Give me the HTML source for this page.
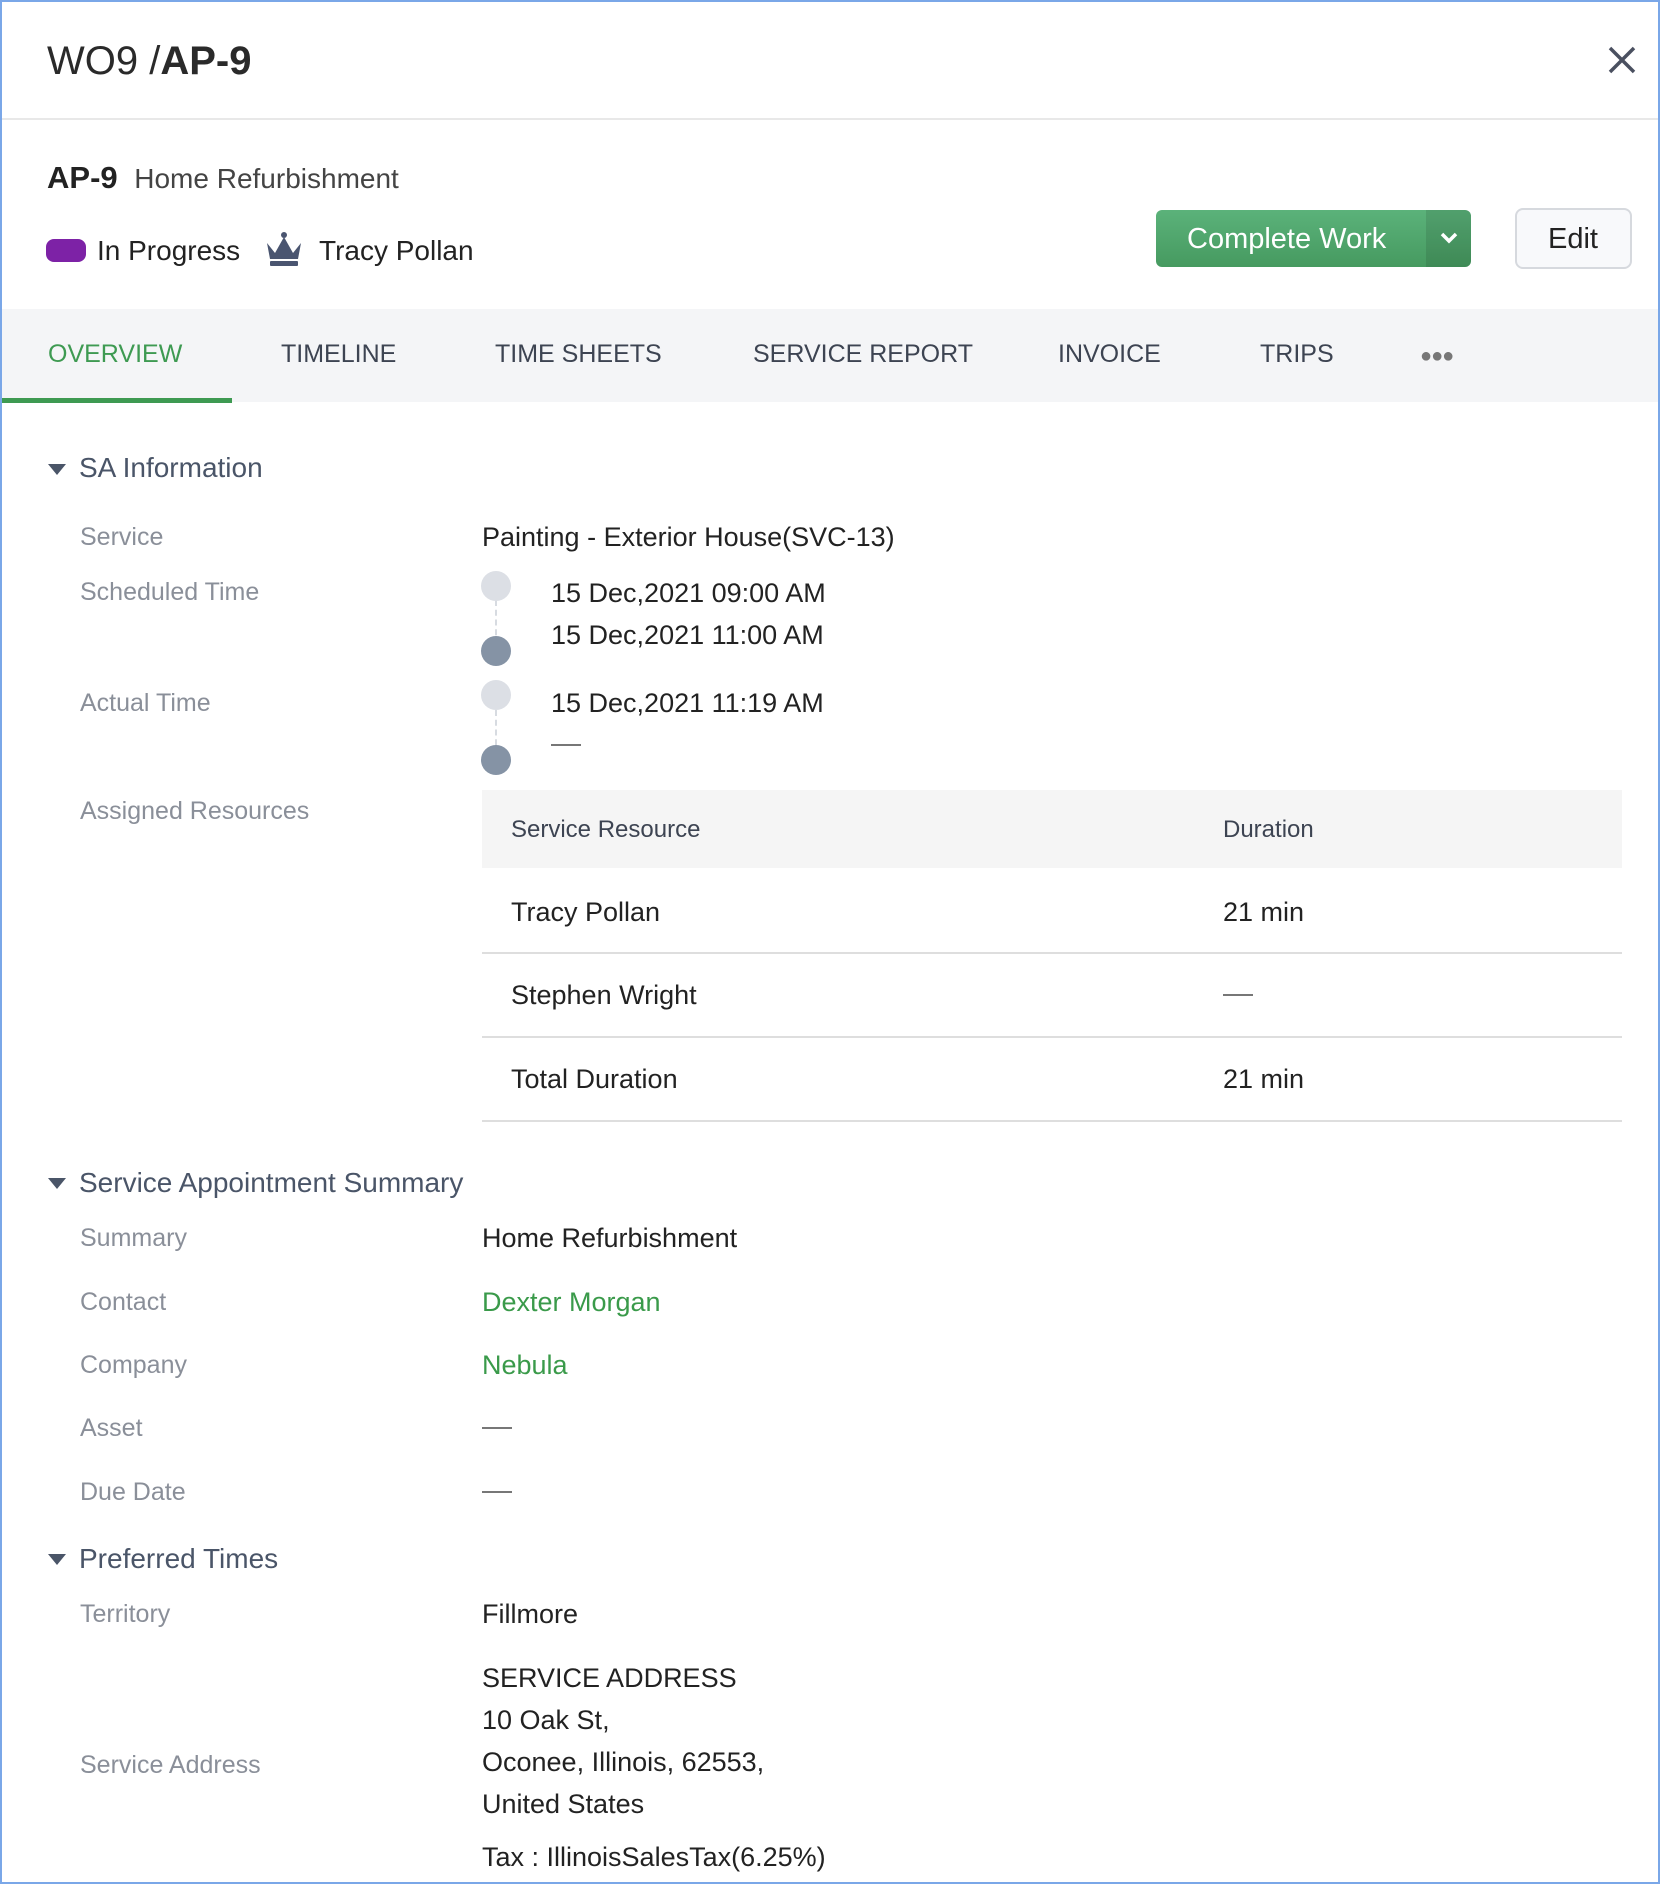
<!DOCTYPE html>
<html><head><meta charset="utf-8"><style>
*{margin:0;padding:0;box-sizing:border-box}
body{width:1660px;height:1884px;background:#fff;font-family:"Liberation Sans",sans-serif;position:relative;overflow:hidden}
.frame{position:absolute;left:0;top:0;width:1660px;height:1884px;border:2px solid #7aa7e8}
.a{position:absolute;white-space:nowrap;line-height:40px;height:40px}
.lbl{color:#8a8f99;font-size:25px;left:80px}
.val{color:#222;font-size:27px;left:482px}
.sec{color:#4a5568;font-size:28px;left:79px}
.tri{position:absolute;left:48px;width:0;height:0;border-left:9px solid transparent;border-right:9px solid transparent;border-top:11px solid #4a5568}
.tab{font-size:25px;color:#3d4452;top:334px}
.dot{position:absolute;width:30px;height:30px;border-radius:50%;left:481px}
.light{background:#dcdfe5}.dark{background:#8593a5}
.vl{position:absolute;left:495px;border-left:2px dashed #d7dbe1;width:0}
.hr{position:absolute;left:482px;width:1140px;height:2px;background:#dedede}
.green{color:#3a9a4a}
</style></head><body>
<div class="frame"></div>
<div class="a" style="left:47px;top:41px;font-size:40px;color:#2a2a2a">WO9 /<b>AP-9</b></div>
<svg style="position:absolute;left:1608px;top:46px" width="28" height="28" viewBox="0 0 28 28"><path d="M2 2L26 26M26 2L2 26" stroke="#4a5060" stroke-width="3.5"/></svg>
<div style="position:absolute;left:2px;top:118px;width:1656px;height:2px;background:#e8e8e8"></div>
<div class="a" style="left:47px;top:158px;font-size:31px;color:#222"><b>AP-9</b> <span style="font-size:28px;color:#444;margin-left:8px">Home Refurbishment</span></div>
<div style="position:absolute;left:46px;top:239px;width:40px;height:23px;border-radius:8px;background:#7d22a6"></div>
<div class="a" style="left:97px;top:231px;font-size:28px;color:#222">In Progress</div>
<svg style="position:absolute;left:264px;top:231px" width="40" height="38" viewBox="0 0 40 38"><path d="M3 12L11 22L20 6L29 22L37 12L34 28H6Z" fill="#4a5570"/><circle cx="20" cy="4" r="3" fill="#4a5570"/><rect x="6" y="30" width="28" height="5" rx="1" fill="#4a5570"/></svg>
<div class="a" style="left:319px;top:231px;font-size:28px;color:#222">Tracy Pollan</div>
<div style="position:absolute;left:1156px;top:210px;width:315px;height:57px;border-radius:6px;background:linear-gradient(#5bb27a,#469a60);overflow:hidden">
<div style="position:absolute;left:270px;top:0;width:45px;height:57px;background:rgba(0,0,0,0.1)"></div>
<div class="a" style="left:31px;top:9px;font-size:29px;color:#fff">Complete Work</div>
<svg style="position:absolute;left:283px;top:21px" width="20" height="14" viewBox="0 0 20 14"><path d="M3 3L10 10L17 3" stroke="#fff" stroke-width="3.5" fill="none"/></svg>
</div>
<div style="position:absolute;left:1515px;top:208px;width:117px;height:61px;border:2px solid #d6d9de;border-radius:8px;background:#f8f9fb"></div>
<div class="a" style="left:1548px;top:219px;font-size:29px;color:#222">Edit</div>
<div style="position:absolute;left:2px;top:309px;width:1656px;height:93px;background:#f4f5f7"></div>
<div style="position:absolute;left:2px;top:398px;width:230px;height:5px;background:#3e9a52"></div>
<div class="a tab" style="left:48px;color:#3e9a52">OVERVIEW</div>
<div class="a tab" style="left:281px">TIMELINE</div>
<div class="a tab" style="left:495px">TIME SHEETS</div>
<div class="a tab" style="left:753px">SERVICE REPORT</div>
<div class="a tab" style="left:1058px">INVOICE</div>
<div class="a tab" style="left:1260px">TRIPS</div>
<div class="a tab" style="left:1420px;color:#777;font-size:20px;letter-spacing:-1px;top:336px">●●●</div>

<div class="tri" style="top:464px"></div><div class="a sec" style="top:448px">SA Information</div>
<div class="a lbl" style="top:517px">Service</div><div class="a val" style="top:517px">Painting - Exterior House(SVC-13)</div>
<div class="a lbl" style="top:572px">Scheduled Time</div>
<div class="vl" style="top:600px;height:45px"></div>
<div class="dot light" style="top:571px"></div><div class="dot dark" style="top:636px"></div>
<div class="a val" style="left:551px;top:573px">15 Dec,2021 09:00 AM</div>
<div class="a val" style="left:551px;top:615px">15 Dec,2021 11:00 AM</div>
<div class="a lbl" style="top:683px">Actual Time</div>
<div class="vl" style="top:710px;height:45px"></div>
<div class="dot light" style="top:680px"></div><div class="dot dark" style="top:745px"></div>
<div class="a val" style="left:551px;top:683px">15 Dec,2021 11:19 AM</div>
<div style="position:absolute;left:551px;top:744px;width:30px;height:2px;background:#777"></div>
<div class="a lbl" style="top:791px">Assigned Resources</div>
<div style="position:absolute;left:482px;top:790px;width:1140px;height:78px;background:#f5f5f5"></div>
<div class="a" style="left:511px;top:810px;font-size:24px;color:#3d4452">Service Resource</div>
<div class="a" style="left:1223px;top:810px;font-size:24px;color:#3d4452">Duration</div>
<div class="a val" style="left:511px;top:892px">Tracy Pollan</div><div class="a val" style="left:1223px;top:892px">21 min</div>
<div class="hr" style="top:952px"></div>
<div class="a val" style="left:511px;top:975px">Stephen Wright</div><div style="position:absolute;left:1223px;top:994px;width:30px;height:2px;background:#777"></div>
<div class="hr" style="top:1036px"></div>
<div class="a val" style="left:511px;top:1059px">Total Duration</div><div class="a val" style="left:1223px;top:1059px">21 min</div>
<div class="hr" style="top:1120px"></div>

<div class="tri" style="top:1178px"></div><div class="a sec" style="top:1163px">Service Appointment Summary</div>
<div class="a lbl" style="top:1218px">Summary</div><div class="a val" style="top:1218px">Home Refurbishment</div>
<div class="a lbl" style="top:1282px">Contact</div><div class="a val green" style="top:1282px">Dexter Morgan</div>
<div class="a lbl" style="top:1345px">Company</div><div class="a val green" style="top:1345px">Nebula</div>
<div class="a lbl" style="top:1408px">Asset</div><div style="position:absolute;left:482px;top:1427px;width:30px;height:2px;background:#777"></div>
<div class="a lbl" style="top:1472px">Due Date</div><div style="position:absolute;left:482px;top:1491px;width:30px;height:2px;background:#777"></div>

<div class="tri" style="top:1554px"></div><div class="a sec" style="top:1539px">Preferred Times</div>
<div class="a lbl" style="top:1594px">Territory</div><div class="a val" style="top:1594px">Fillmore</div>
<div class="a val" style="top:1658px">SERVICE ADDRESS</div>
<div class="a val" style="top:1700px">10 Oak St,</div>
<div class="a val" style="top:1742px">Oconee, Illinois, 62553,</div>
<div class="a val" style="top:1784px">United States</div>
<div class="a lbl" style="top:1745px">Service Address</div>
<div class="a val" style="top:1837px">Tax : IllinoisSalesTax(6.25%)</div>
</body></html>
